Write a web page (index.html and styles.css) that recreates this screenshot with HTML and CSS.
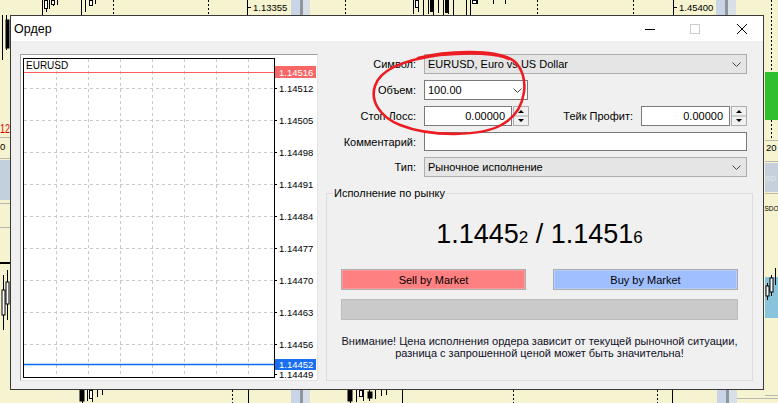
FILE: index.html
```html
<!DOCTYPE html>
<html lang="ru">
<head>
    <meta charset="UTF-8">
    <meta name="viewport" content="width=device-width, initial-scale=1.0">
    <title>Ордер</title>
    <link rel="stylesheet" href="styles.css">
</head>
<body>
    <!-- terminal charts behind the dialog -->
    <svg class="desk" width="778" height="403" viewBox="0 0 778 403">
        <g stroke="#000" stroke-dasharray="2 2">
            <path d="M113.5 0V15 M208.5 0V15 M345.5 0V15 M537.5 0V15 M633.5 0V15 M771.5 0V140"/>
            <path d="M232.5 390V403 M513.5 390V403 M657.5 390V403"/>
        </g>
        <g stroke="#000">
            <path d="M247.5 0V15 M247 7.5H251 M673.5 0V15 M673 7.5H677"/>
            <path d="M248.5 390V403 M402.5 390V403 M672.5 390V403"/>
            <path d="M11.5 15V125"/>
        </g>
        <text class="desk-num" x="253" y="11">1.13355</text>
        <text class="desk-num" x="679" y="11">1.45400</text>
        <g class="scroll">
            <rect x="291" y="0" width="9" height="15" fill="#c9d5e6"/>
            <rect x="300" y="0" width="3" height="15" fill="#8e959e"/>
            <rect x="303" y="0" width="7" height="15" fill="#d9dfe7"/>
            <rect x="716" y="0" width="9" height="15" fill="#c9d5e6"/>
            <rect x="725" y="0" width="3" height="15" fill="#8e959e"/>
            <rect x="728" y="0" width="8" height="15" fill="#d9dfe7"/>
            <rect x="291" y="390" width="9" height="13" fill="#c9d5e6"/>
            <rect x="300" y="390" width="3" height="13" fill="#8e959e"/>
            <rect x="303" y="390" width="7" height="13" fill="#d9dfe7"/>
            <rect x="717" y="390" width="9" height="13" fill="#c9d5e6"/>
            <rect x="726" y="390" width="3" height="13" fill="#8e959e"/>
            <rect x="729" y="390" width="8" height="13" fill="#d9dfe7"/>
        </g>
        <!-- candles -->
        <g stroke="#000" fill="#fff">
            <path d="M42.5 0V15 M46.5 0V12 M49.5 0V9 M53.5 0V6 M57.5 0V5 M81.5 0V15 M85.5 0V12 M91.5 0V6 M95.5 0V4"/>
            <rect x="44.5" y="0.5" width="3" height="8"/>
            <rect x="51.5" y="0.5" width="3" height="4"/>
            <rect x="89.5" y="0.5" width="3" height="5"/>
            <path d="M413.5 0V14 M418.5 0V12 M423.5 0V15 M428.5 0V14 M433.5 0V15 M438.5 0V13 M443.5 0V15 M448.5 0V14 M453.5 0V15 M466.5 0V15 M470.5 0V15 M477.5 0V4 M493.5 0V4 M505.5 0V4"/>
            <rect x="415.5" y="0.5" width="3" height="7"/>
            <rect x="430.5" y="0.5" width="3" height="11" fill="#000"/>
            <rect x="445.5" y="0.5" width="3" height="12" fill="#000"/>
            <rect x="472.5" y="0.5" width="4" height="3"/>
            <path d="M2.5 15V60 M6.5 15V50 M3.5 275V330 M7.5 270V320"/>
            <rect x="6" y="20" width="3" height="28" fill="#000"/>
            <rect x="2" y="290" width="3" height="25"/>
            <rect x="6" y="282" width="3" height="22"/>
            <path d="M82.5 390V403 M87.5 390V401 M92.5 390V402 M97.5 390V397 M102.5 390V395"/>
            <rect x="80" y="390" width="4" height="11" fill="#000"/>
            <rect x="89.5" y="390.5" width="3" height="8"/>
            <path d="M350.5 390V403 M356.5 390V402 M363.5 390V401 M369.5 390V401 M375.5 390V399 M381.5 390V396 M386.5 390V395"/>
            <rect x="348" y="390" width="4" height="11" fill="#000"/>
            <rect x="359.5" y="390.5" width="3" height="6"/>
            <rect x="368" y="392" width="4" height="6" fill="#000"/>
        </g>
        <!-- left edge -->
        <text class="desk-red" x="0" y="133" textLength="10" lengthAdjust="spacingAndGlyphs">12</text>
        <text class="desk-num" x="0" y="150">0</text>
        <path d="M0 137.5H10 M0 158.5H10 M0 203.5H10 M0 227.5H10" stroke="#b8b8b0"/>
        <rect x="0" y="160" width="10" height="40" fill="#c3cfdc"/>
        <rect x="0" y="262" width="10" height="2" fill="#000"/>
        <!-- right edge -->
        <rect x="765" y="72" width="13" height="48" fill="#2fbf2f"/>
        <text class="desk-num" x="766" y="151">20</text>
        <path d="M765 140.5H778 M765 161.5H778 M765 193.5H778 M765 395.5H778" stroke="#b8b8b0"/>
        <rect x="765" y="163" width="13" height="29" fill="#c6d0dc"/>
        <text class="desk-ghost" x="765" y="181">SD</text>
        <text class="desk-tiny" x="764.5" y="211">SDO</text>
        <rect x="765" y="277" width="13" height="41" fill="#89c4dd"/>
        <g stroke="#000" fill="#fff">
            <path d="M767.5 283V300 M771.5 275V296 M775.5 268V285"/>
            <rect x="766" y="286" width="3" height="10"/>
            <rect x="770" y="278" width="3" height="14"/>
        </g>
        <path d="M737 398.5H778" stroke="#b8b8b0"/>
    </svg>

    <div class="dialog">
        <div class="titlebar">
            <span class="title">Ордер</span>
            <div class="cap-btns">
                <svg width="10" height="10" viewBox="0 0 10 10"><path d="M0 5.5H10" stroke="#000"/></svg>
                <svg width="10" height="10" viewBox="0 0 10 10"><rect x="0.5" y="0.5" width="9" height="9" fill="none" stroke="#cccccc"/></svg>
                <svg class="cap-close" width="10" height="10" viewBox="0 0 10 10"><path d="M0 0L10 10M10 0L0 10" stroke="#000"/></svg>
            </div>
        </div>

        <div class="dlg-body">
            <!-- tick chart -->
            <div class="chart-panel">
                <svg width="296" height="325" viewBox="21 55 296 325">
                    <rect x="21" y="55" width="296" height="325" fill="#fff"/>
                    <g stroke="#c8c8c8" stroke-dasharray="3 3">
                        <path d="M56.5 59V377 M88.5 59V377 M120.5 59V377 M152.5 59V377 M184.5 59V377 M216.5 59V377 M248.5 59V377"/>
                        <path d="M24 88.5H274 M24 120.5H274 M24 152.5H274 M24 184.5H274 M24 216.5H274 M24 248.5H274 M24 280.5H274 M24 312.5H274 M24 344.5H274"/>
                    </g>
                    <rect x="23.5" y="58.5" width="251" height="319" fill="none" stroke="#000"/>
                    <path d="M24 72.5H274" stroke="#ff5c5c"/>
                    <path d="M24 364.5H274" stroke="#0a6cf0" stroke-width="1.4"/>
                    <path d="M274 88.5h3 M274 120.5h3 M274 152.5h3 M274 184.5h3 M274 216.5h3 M274 248.5h3 M274 280.5h3 M274 312.5h3 M274 344.5h3 M274 374.5h3" stroke="#000"/>
                    <text class="ax ax-sym" x="26" y="69">EURUSD</text>
                    <g class="ax">
                        <text x="279" y="92">1.14512</text>
                        <text x="279" y="124">1.14505</text>
                        <text x="279" y="156">1.14498</text>
                        <text x="279" y="188">1.14491</text>
                        <text x="279" y="220">1.14484</text>
                        <text x="279" y="252">1.14477</text>
                        <text x="279" y="284">1.14470</text>
                        <text x="279" y="316">1.14463</text>
                        <text x="279" y="348">1.14456</text>
                        <text x="279" y="378">1.14449</text>
                    </g>
                    <rect x="275" y="66" width="41" height="12" fill="#f86666"/>
                    <text class="ax ax-tag" x="279" y="75.5">1.14516</text>
                    <rect x="275" y="359" width="41" height="11" fill="#1a6ff0"/>
                    <text class="ax ax-tag" x="279" y="368">1.14452</text>
                </svg>
            </div>

            <div class="order-form">
                <div class="form-grid">
                    <label>Символ:</label>
                    <div class="combo">EURUSD, Euro vs US Dollar<svg class="chev" width="9" height="5" viewBox="0 0 9 5"><path d="M0.5 0.5L4.5 4.5L8.5 0.5" fill="none" stroke="#444"/></svg></div>

                    <label>Объем:</label>
                    <div class="edit edit-volume">100.00<svg class="chev" width="9" height="5" viewBox="0 0 9 5"><path d="M0.5 0.5L4.5 4.5L8.5 0.5" fill="none" stroke="#444"/></svg></div>

                    <label>Стоп Лосс:</label>
                    <div class="sl-tp">
                        <div class="spin-field">
                            <div class="edit num">0.00000</div>
                            <svg class="spin" width="16" height="20" viewBox="0 0 16 20"><rect x="0.5" y="0.5" width="15" height="19" fill="#f0f0f0" stroke="#adadad"/><path d="M1 10H15" stroke="#adadad"/><path d="M5 7L8 4L11 7Z M5 13L8 16L11 13Z" fill="#000"/></svg>
                        </div>
                        <div class="spin-field">
                            <label class="tp-label">Тейк Профит:</label>
                            <div class="edit num tp">0.00000</div>
                            <svg class="spin" width="16" height="20" viewBox="0 0 16 20"><rect x="0.5" y="0.5" width="15" height="19" fill="#f0f0f0" stroke="#adadad"/><path d="M1 10H15" stroke="#adadad"/><path d="M5 7L8 4L11 7Z M5 13L8 16L11 13Z" fill="#000"/></svg>
                        </div>
                    </div>

                    <label>Комментарий:</label>
                    <div class="edit"></div>

                    <label>Тип:</label>
                    <div class="combo">Рыночное исполнение<svg class="chev" width="9" height="5" viewBox="0 0 9 5"><path d="M0.5 0.5L4.5 4.5L8.5 0.5" fill="none" stroke="#444"/></svg></div>
                </div>

                <fieldset class="market">
                    <legend>Исполнение по рынку</legend>
                    <div class="quote">1.1445<small>2</small> / 1.1451<small>6</small></div>
                    <div class="trade-btns">
                        <div class="btn btn-sell">Sell by Market</div>
                        <div class="btn btn-buy">Buy by Market</div>
                    </div>
                    <div class="progress"></div>
                    <p class="warning">Внимание! Цена исполнения ордера зависит от текущей рыночной ситуации,<br>разница с запрошенной ценой может быть значительна!</p>
                </fieldset>
            </div>
        </div>
    </div>

    <!-- red marker circle drawn over the screenshot -->
    <svg class="scribble" width="778" height="403" viewBox="0 0 778 403">
        <path d="M418 58 C448 50 498 49 514 61 C531 76 527 110 503 124 C482 137 430 137 400 125 C380 117 370 101 375 86 C380 70 402 60 440 55 C470 52 497 53 509 59" fill="none" stroke="#ec1c24" stroke-width="2.6" stroke-linecap="round"/>
    </svg>
</body>
</html>
```

FILE: styles.css
```css
body {
    margin: 0;
    width: 778px;
    height: 403px;
    position: relative;
    overflow: hidden;
    background: #f5f3d0;
    font-family: "Liberation Sans", Arial, sans-serif;
    font-size: 11px;
    color: #000;
}
.desk {
    position: absolute;
    left: 0;
    top: 0;
}
.desk-num {
    font-family: "Liberation Sans", Arial, sans-serif;
    font-size: 9.5px;
    fill: #000;
}
.desk-tiny {
    font-family: "Liberation Sans", Arial, sans-serif;
    font-size: 6.5px;
    fill: #000;
}
.desk-red {
    font-family: "Liberation Sans", Arial, sans-serif;
    font-size: 13px;
    fill: #e00000;
}
.desk-ghost {
    font-family: "Liberation Sans", Arial, sans-serif;
    font-size: 8px;
    fill: #e4e8ee;
}
.dialog {
    position: absolute;
    left: 10px;
    top: 15px;
    width: 754px;
    height: 375px;
    box-sizing: border-box;
    border: 1px solid #3a3a3a;
    background: #f0f0f0;
    display: flex;
    flex-direction: column;
}
.titlebar {
    height: 25px;
    flex: none;
    background: #fff;
    display: flex;
    align-items: center;
    padding-left: 3px;
}
.title {
    font-size: 12.5px;
}
.cap-btns {
    margin-left: auto;
    margin-right: 16px;
    display: flex;
    align-items: center;
    gap: 35px;
}
.cap-close {
    margin-left: 2px;
}
.dlg-body {
    flex: 1;
    display: flex;
    gap: 8px;
    padding: 13px 0 0 9px;
}
.chart-panel {
    width: 298px;
    height: 327px;
    box-sizing: border-box;
    border: 1px solid #e3e3e3;
    border-top-color: #a0a0a0;
    border-left-color: #a0a0a0;
}
.chart-panel svg {
    display: block;
}
.ax {
    font-family: "Liberation Sans", Arial, sans-serif;
    font-size: 9.5px;
    fill: #000;
}
.ax-sym {
    font-size: 10px;
}
.ax-tag {
    fill: #fff;
}
.order-form {
    width: 427px;
}
.form-grid {
    width: 421px;
    display: grid;
    grid-template-columns: 90px 323px;
    grid-template-rows: 20px 20px 20px 19px 20px;
    column-gap: 8px;
    row-gap: 6px;
}
.form-grid label {
    text-align: right;
    align-self: center;
}
.combo,
.edit {
    box-sizing: border-box;
    height: 100%;
    display: flex;
    align-items: center;
    padding: 0 3px;
    border: 1px solid #adadad;
    background: #e5e5e5;
    white-space: nowrap;
}
.edit {
    background: #fff;
    border-color: #7a7a7a;
}
.chev {
    margin-left: auto;
    margin-right: 2px;
}
.edit-volume {
    width: 104px;
}
.sl-tp {
    display: flex;
    justify-content: space-between;
}
.spin-field {
    display: flex;
    gap: 1px;
    align-items: stretch;
}
.num {
    width: 88px;
    justify-content: flex-end;
    padding-right: 6px;
}
.num.tp {
    width: 89px;
}
.tp-label {
    align-self: center;
    margin-right: 7px;
}
.spin {
    display: block;
}
.market {
    margin: 10px 0 0;
    padding: 0 14px;
    height: 194px;
    box-sizing: border-box;
    border: 1px solid #dcdcdc;
}
.market legend {
    margin-left: -8px;
    padding: 0 1px;
    line-height: 13px;
}
.quote {
    margin-top: 19px;
    height: 30px;
    line-height: 30px;
    text-align: center;
    font-size: 27px;
}
.quote small {
    font-size: 17px;
}
.trade-btns {
    margin-top: 20px;
    display: flex;
    justify-content: space-between;
}
.btn {
    width: 185px;
    height: 21px;
    box-sizing: border-box;
    border: 1px solid #adadad;
    display: flex;
    align-items: center;
    justify-content: center;
    font-size: 11px;
}
.btn-sell {
    background: #ff8080;
    box-shadow: inset 0 0 0 1px #ff9a9a;
}
.btn-buy {
    background: #a0bfff;
    box-shadow: inset 0 0 0 1px #b6ceff;
}
.progress {
    margin-top: 9px;
    height: 21px;
    box-sizing: border-box;
    border: 1px solid #bcbcbc;
    background: #cacaca;
}
.warning {
    margin: 15px 0 0;
    text-align: center;
    line-height: 12px;
    color: #101028;
}
.scribble {
    position: absolute;
    left: 0;
    top: 0;
    pointer-events: none;
}
```
